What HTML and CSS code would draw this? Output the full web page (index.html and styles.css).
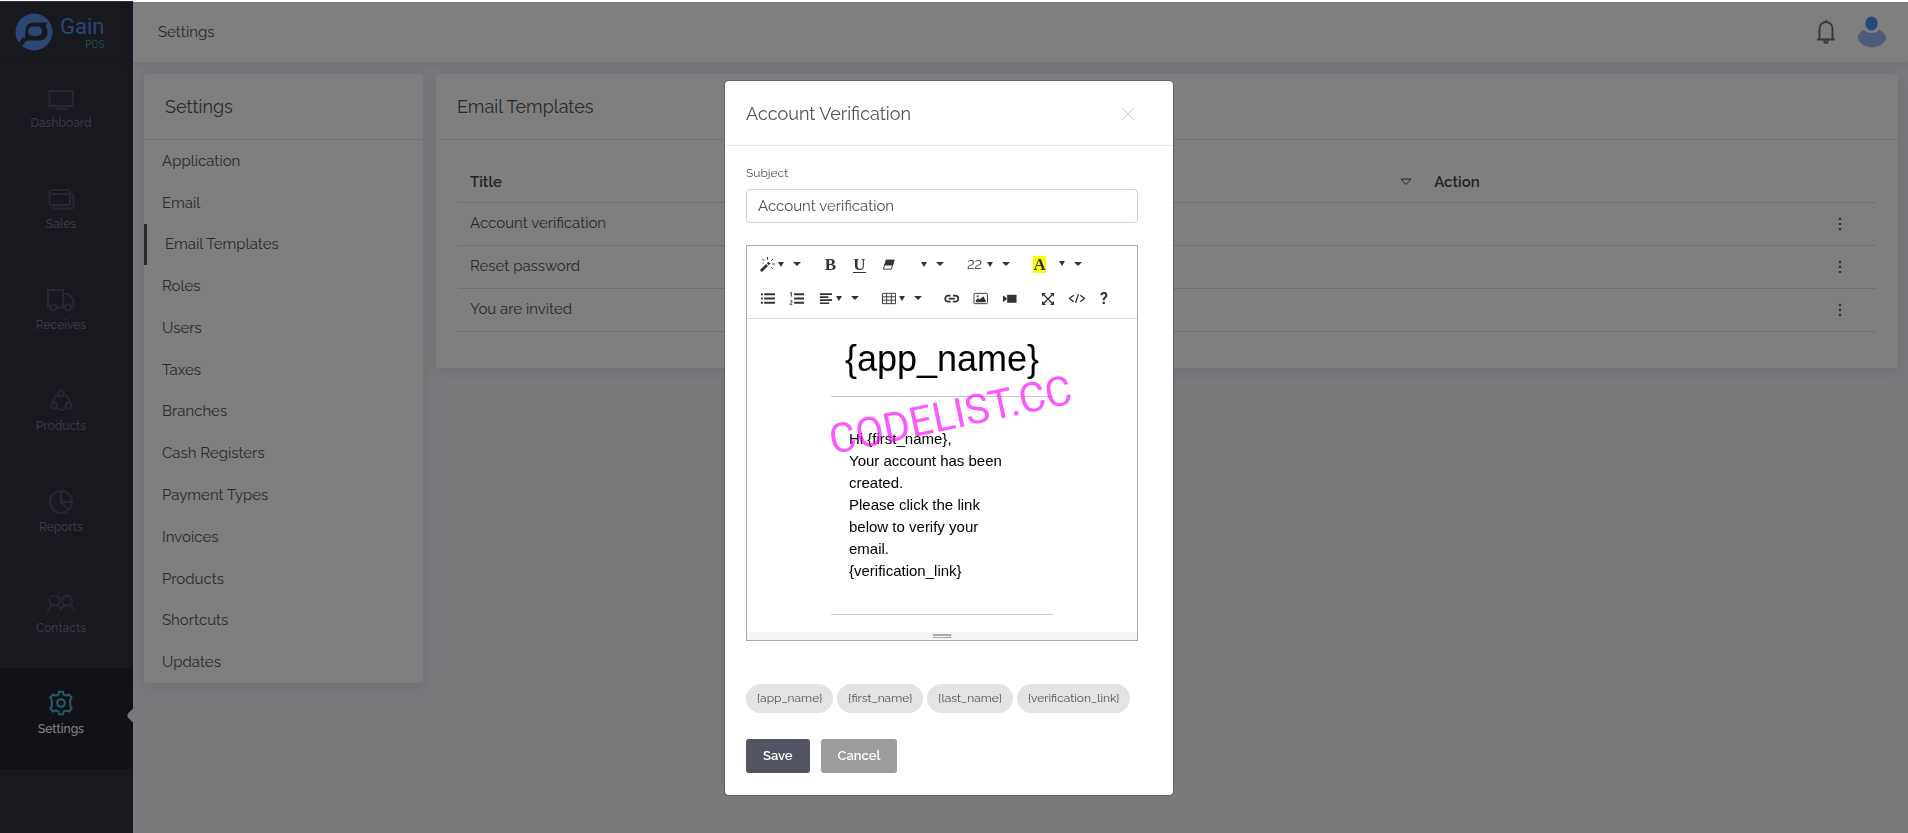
FILE: index.html
```html
<!DOCTYPE html>
<html lang="en">
<head>
<meta charset="utf-8">
<title>Gain POS - Settings</title>
<meta name="viewport" content="width=device-width, initial-scale=1">
<link rel="stylesheet" href="styles.css">
</head>
<body>
<div class="app">
  <aside class="sidebar">
    <a class="logo" href="#">
      <svg class="logo-mark" viewBox="0 0 38 38" aria-hidden="true">
        <circle cx="19" cy="19" r="18.5" fill="#568fe8"/>
        <path d="M7.500 32C10 26 10.500 22 10.500 18.500C10.500 12.500 13.500 9.500 19 9.500H32.500L30.500 12.500C32 15 32.500 17 32.500 19.500C32.500 25 29 27.500 24 27.500H18C14.500 27.500 12 27 9.500 29.500Z" fill="#30303e"/>
        <path d="M3 31L8 24L11 27L7 34Z" fill="#30303e"/>
        <rect x="13" y="13.500" width="14" height="9.500" rx="4.700" fill="#568fe8"/>
      </svg>
      <span class="logo-text"><span class="logo-name">Gain</span><span class="logo-sub">POS</span></span>
    </a>
    <nav class="nav">
      <a class="nav-item" href="#"><svg viewBox="0 0 28 28"><rect x="2.500" y="8" width="23.500" height="15"/><path d="M14.300 23v3M9 26h11"/></svg>Dashboard</a>
      <a class="nav-item" href="#"><svg viewBox="0 -1.500 28 28"><rect x="2.500" y="4.500" width="20.500" height="15" rx="2"/><path d="M2.500 8.500H23M23 8.500h2a1.500 1.500 0 0 1 1.500 1.500v11a2 2 0 0 1-2 2H8.500a2 2 0 0 1-2-2v-1.500M23 12.500h3.500"/></svg>Sales</a>
      <a class="nav-item" href="#"><svg viewBox="0 -1 28 28"><path d="M3.500 21.500H1V4h15v17.500M9.500 21.500h8.500M16 8h5.500l5 5.500v8h-2.500"/><circle cx="6.500" cy="21.500" r="3"/><circle cx="21" cy="21.500" r="3"/></svg>Receives</a>
      <a class="nav-item" href="#"><svg viewBox="0 -1 28 28"><circle cx="14" cy="6.500" r="3"/><circle cx="7" cy="18.500" r="3"/><circle cx="21.500" cy="18.500" r="3"/><path d="M11 7.500C7.500 9.500 6 12 6 15.500M17 7.500c4 2 5.500 4.500 5.500 8M9.500 21c3 2.500 6.500 2.500 9.500 0"/></svg>Products</a>
      <a class="nav-item" href="#"><svg viewBox="0 -1 28 28"><circle cx="14" cy="14" r="11"/><path d="M14 3v11h11M14 14l7.500 8"/></svg>Reports</a>
      <a class="nav-item" href="#"><svg viewBox="0 -2.500 28 28"><circle cx="7.500" cy="10" r="5"/><circle cx="20" cy="10" r="5"/><path d="M1 21c0-8 13-8 13-1.500C14 13 27 13 27 21"/></svg>Contacts</a>
      <a class="nav-item active" href="#" aria-current="page"><svg viewBox="0 0 28 28"><path d="M11.600 5.300L12 2.700h4l.4 2.600 2.600 1.300 3-1.100 2.600 3-1.500 2.700.1 5.600 1.400 2.700-2.600 3-3-.9-2.600 1.100-.4 2.600h-4l-.4-2.600L9 21.600l-3 .9-2.600-3 1.500-2.700-.1-5.600L3.400 8.500l2.600-3 3 1.100z"/><circle cx="14" cy="14" r="3.800"/></svg>Settings</a>
    </nav>
  </aside>

  <div class="main">
    <header class="topbar">
      <span>Settings</span>
      <div class="topbar-actions">
        <button class="icon-button" type="button" aria-label="Notifications">
          <svg class="bell" viewBox="0 0 18 24"><path d="M2.500 19V9.500C2.500 4.500 5.500 2 9 2s6.500 2.500 6.500 7.500V19M0 19.500h18M9 .3V2"/><circle cx="9" cy="21.300" r="1.700"/></svg>
        </button>
        <button class="icon-button" type="button" aria-label="Account">
          <svg class="avatar" viewBox="0 0 30 32"><ellipse cx="14.500" cy="7.500" rx="6.200" ry="7" fill="#5291f5"/><path d="M7 13.500C9 18 20 18 22 13.500C25.500 15 29.500 19.500 29.500 22C27 28 21 31.500 15 31.500S3 28 .5 22C.5 19.500 4 15 7 13.500Z" fill="#97b8f6"/></svg>
        </button>
      </div>
    </header>

    <div class="content">
      <section class="card">
        <h2 class="card-title">Settings</h2>
        <ul class="settings-list">
          <li><a href="#">Application</a></li>
          <li><a href="#">Email</a></li>
          <li><a class="current" href="#">Email Templates</a></li>
          <li><a href="#">Roles</a></li>
          <li><a href="#">Users</a></li>
          <li><a href="#">Taxes</a></li>
          <li><a href="#">Branches</a></li>
          <li><a href="#">Cash Registers</a></li>
          <li><a href="#">Payment Types</a></li>
          <li><a href="#">Invoices</a></li>
          <li><a href="#">Products</a></li>
          <li><a href="#">Shortcuts</a></li>
          <li><a href="#">Updates</a></li>
        </ul>
      </section>

      <section class="card">
        <h2 class="card-title">Email Templates</h2>
        <div class="table-wrap">
          <table class="table">
            <thead>
              <tr>
                <th class="col-title"><span class="sortable">Title <svg class="sort" viewBox="0 0 12 8"><path d="M1 1h10L6 6.500z"/></svg></span></th>
                <th>Action</th>
              </tr>
            </thead>
            <tbody>
              <tr><td>Account verification</td><td class="actions"><button class="icon-button" type="button" aria-label="Actions for Account verification"><svg class="dots" viewBox="0 0 4 14"><circle cx="2" cy="2" r="1.300"/><circle cx="2" cy="7" r="1.300"/><circle cx="2" cy="12" r="1.300"/></svg></button></td></tr>
              <tr><td>Reset password</td><td class="actions"><button class="icon-button" type="button" aria-label="Actions for Reset password"><svg class="dots" viewBox="0 0 4 14"><circle cx="2" cy="2" r="1.300"/><circle cx="2" cy="7" r="1.300"/><circle cx="2" cy="12" r="1.300"/></svg></button></td></tr>
              <tr><td>You are invited</td><td class="actions"><button class="icon-button" type="button" aria-label="Actions for You are invited"><svg class="dots" viewBox="0 0 4 14"><circle cx="2" cy="2" r="1.300"/><circle cx="2" cy="7" r="1.300"/><circle cx="2" cy="12" r="1.300"/></svg></button></td></tr>
            </tbody>
          </table>
        </div>
      </section>
    </div>
  </div>
</div>

<div class="backdrop">
  <div class="modal" role="dialog" aria-modal="true" aria-labelledby="modal-title">
    <div class="modal-header">
      <h2 class="modal-title" id="modal-title">Account Verification</h2>
      <button class="icon-button" type="button" aria-label="Close"><svg class="close" viewBox="0 0 12 12"><path d="M.5.500l11 11M11.500.500l-11 11"/></svg></button>
    </div>
    <form class="modal-body">
      <label class="label" for="subject">Subject</label>
      <input class="input" id="subject" type="text" value="Account verification">

      <div class="editor">
        <div class="toolbar">
          <div class="toolbar-row">
            <div class="group">
              <button class="tool lead" type="button" aria-label="Style"><svg class="ico" viewBox="0 0 16 16"><path d="M1 15L7.500 8.500" stroke-width="3"/><path d="M8.300 7.700L10 6" stroke-width="3"/><path d="M8 0v3M2.500 2l2 2M14 2l-2 2M13 7.500h3M12 11l2 2M3 6.500h1" stroke-width="1"/></svg><i class="caret"></i></button>
              <button class="tool more" type="button" aria-label="More styles"><i class="caret wide"></i></button>
            </div>
            <div class="group">
              <button class="tool serif" type="button" aria-label="Bold"><b>B</b></button>
              <button class="tool serif" type="button" aria-label="Underline"><b class="underlined">U</b></button>
              <button class="tool" type="button" aria-label="Remove formatting"><svg class="ico" viewBox="0 0 16 16"><path d="M5.500 3.500h8.500L11 13H2.500z" stroke-width="1"/><path d="M5.500 3h9L12.500 9H3.500z" fill="currentColor" stroke="none"/></svg></button>
            </div>
            <div class="group">
              <button class="tool lead" type="button" aria-label="Font family"><i class="caret"></i></button>
              <button class="tool more" type="button" aria-label="More fonts"><i class="caret wide"></i></button>
            </div>
            <div class="group">
              <button class="tool lead size" type="button" aria-label="Font size 22">22<i class="caret"></i></button>
              <button class="tool more" type="button" aria-label="More sizes"><i class="caret wide"></i></button>
            </div>
            <div class="group">
              <button class="tool serif" type="button" aria-label="Recent color"><b class="marked">A</b></button>
              <button class="tool more" type="button" aria-label="Text color"><i class="caret"></i></button>
              <button class="tool more" type="button" aria-label="More colors"><i class="caret wide"></i></button>
            </div>
          </div>
          <div class="toolbar-row">
            <div class="group">
              <button class="tool" type="button" aria-label="Unordered list"><svg class="ico" viewBox="0 0 16 16"><path d="M4.500 3.500H16M4.500 8H16M4.500 12.500H16M1 3.500h2M1 8h2M1 12.500h2" stroke-width="2"/></svg></button>
              <button class="tool" type="button" aria-label="Ordered list"><svg class="ico" viewBox="0 0 16 16"><path d="M5.500 3.500H16M5.500 8H16M5.500 12.500H16" stroke-width="2"/><path d="M1 2.500l1.500-1V6M1 10.500h2v1.700l-2 2h2.500" stroke-width="1"/></svg></button>
              <button class="tool lead" type="button" aria-label="Paragraph"><svg class="ico" viewBox="0 0 16 16"><path d="M2 3.300h13M2 6.500h9M2 9.700h13M2 13h10" stroke-width="1.700"/></svg><i class="caret"></i></button>
              <button class="tool more" type="button" aria-label="More alignment"><i class="caret wide"></i></button>
            </div>
            <div class="group">
              <button class="tool lead" type="button" aria-label="Table"><svg class="ico" viewBox="0 0 16 16"><path d="M1.500 2.500h14v11h-14zM1.500 6.200h14M1.500 9.800h14M6 2.500v11M11 2.500v11" stroke-width="1"/></svg><i class="caret"></i></button>
              <button class="tool more" type="button" aria-label="More table options"><i class="caret wide"></i></button>
            </div>
            <div class="group">
              <button class="tool" type="button" aria-label="Link"><svg class="ico" viewBox="0 0 16 16"><path d="M7 5H4.500a3.200 3.200 0 0 0 0 6.400H7M9.500 5H12a3.200 3.200 0 0 1 0 6.400H9.500M5 8.200h6.500" stroke-width="1.900"/></svg></button>
              <button class="tool" type="button" aria-label="Picture"><svg class="ico" viewBox="0 0 16 16"><rect x="1" y="2.500" width="14.500" height="11" rx="1" stroke-width="1"/><path d="M3 12V10l2.500-2.500L7 9l4-3.500L13.500 10v2z" fill="currentColor" stroke="none"/><circle cx="5" cy="5.500" r="1.100" fill="currentColor" stroke="none"/></svg></button>
              <button class="tool" type="button" aria-label="Video"><svg class="ico" viewBox="0 0 16 16"><path d="M5.500 4H15.500v8.500H5.500zM1 4.800L4.800 7.300v2L1 11.800z" fill="currentColor" stroke="none"/></svg></button>
            </div>
            <div class="group">
              <button class="tool" type="button" aria-label="Full screen"><svg class="ico small" viewBox="0 0 12 12"><path d="M1 1l10 10M11 1L1 11" stroke-width="1.300"/><path d="M0 0h4L0 4zM12 0v4L8 0zM0 12V8l4 4zM12 12H8l4-4z" fill="currentColor" stroke="none"/></svg></button>
              <button class="tool" type="button" aria-label="Code view"><svg class="ico large" viewBox="0 0 18 16"><path d="M5.500 4.500L1 8l4.500 3.500M12.500 4.500L17 8l-4.500 3.500M10.500 3.500l-3 9" stroke-width="1.400"/></svg></button>
              <button class="tool help" type="button" aria-label="Help"><b>?</b></button>
            </div>
          </div>
        </div>
        <div class="editable" contenteditable="true">
          <h1 class="mail-title">{app_name}</h1>
          <div class="mail-body">Hi {first_name},<br>Your account has been created.<br>Please click the link below to verify your email.<br>{verification_link}</div>
        </div>
        <div class="statusbar"><span class="grip"></span></div>
        <span class="watermark">CODELIST.CC</span>
      </div>

      <div class="chips">
        <button class="chip" type="button">{app_name}</button>
        <button class="chip" type="button">{first_name}</button>
        <button class="chip" type="button">{last_name}</button>
        <button class="chip" type="button">{verification_link}</button>
      </div>

      <div class="buttons">
        <button class="btn" type="button">Save</button>
        <button class="btn muted" type="button">Cancel</button>
      </div>
    </form>
  </div>
</div>
</body>
</html>
```
FILE: styles.css
```css
*, *::before, *::after { box-sizing: border-box; }

body {
  margin: 0;
  border-top: 1px solid #fff;
  background: #f2f4f9;
  color: #4e5259;
  font: 15px/22px Raleway, Lato, sans-serif;
  font-variant-numeric: lining-nums;
}

h1, h2, ul { margin: 0; padding: 0; font-weight: 400; }
ul { list-style: none; }
a { color: inherit; text-decoration: none; }
svg { display: block; fill: none; stroke: currentColor; }

button, input { font: inherit; color: inherit; }
button { border: 0; background: none; padding: 0; cursor: pointer; }
.icon-button { display: block; }

/* Page shell */
.app { display: flex; min-height: calc(100vh - 1px); }

.sidebar {
  flex: none;
  width: 133px;
  background: #30303e;
}

.logo {
  display: flex;
  align-items: center;
  gap: 7px;
  height: 61px;
  padding: 2px 0 0 15px;
  border-bottom: 1px solid #262633;
  font-family: Roboto, sans-serif;
}
.logo-mark { width: 38px; height: 38px; stroke: none; }
.logo-text { display: flex; flex-direction: column; align-items: flex-end; margin-bottom: 1px; }
.logo-name { color: #568fe8; font-size: 22px; line-height: 25px; }
.logo-sub { color: #3f9aa0; font-size: 10px; line-height: 11px; }

.nav-item {
  display: flex;
  flex-direction: column;
  align-items: center;
  position: relative;
  height: 101px;
  padding: 21px 11px 0 0;
  color: #737590;
  font-size: 12px;
  font-weight: 500;
  line-height: 20px;
}
.nav-item svg {
  width: 28px;
  height: 28px;
  margin-bottom: 2px;
  color: #505068;
  stroke-width: 2;
}
.nav-item.active { background: #232331; color: #fff; overflow: hidden; }
.nav-item.active svg { color: #48bcc9; }
.nav-item.active::after {
  content: "";
  position: absolute;
  top: 40px;
  right: -11px;
  width: 15px;
  height: 15px;
  border-radius: 4px;
  background: #f2f4f9;
  transform: rotate(45deg);
}

.main { flex: 1; min-width: 0; }

.topbar {
  display: flex;
  align-items: center;
  justify-content: space-between;
  height: 61px;
  padding: 0 21px 0 25px;
  background: #fff;
  box-shadow: 0 1px 10px rgba(60, 60, 90, 0.12);
}
.topbar-actions { display: flex; align-items: center; gap: 22px; color: #71727a; }
.bell { width: 18px; height: 24px; stroke-width: 2; }
.avatar { width: 30px; height: 32px; stroke: none; }

.content {
  display: grid;
  grid-template-columns: 279px 1fr;
  gap: 13px;
  align-items: start;
  padding: 12px 10px 12px 11px;
}

.card {
  border-radius: 4px;
  background: #fff;
  box-shadow: 0 2px 14px rgba(40, 40, 70, 0.12);
}
.card-title {
  padding: 21px;
  border-bottom: 1px solid #e8e8ec;
  font-size: 18px;
  line-height: 23px;
}

.settings-list { display: grid; grid-auto-rows: 1fr; height: 543px; }
.settings-list a { display: flex; align-items: center; height: 100%; padding-left: 18px; }
.settings-list .current { border-left: 3px solid #50525f; }

/* Template table */
.table-wrap { padding: 20px 22px 36px; }
.table { width: 100%; border-collapse: collapse; table-layout: fixed; text-align: left; }
.table th, .table td {
  height: 43px;
  padding: 0 10px 0 12px;
  border-bottom: 1px solid #dfdfe3;
}
.table td { padding-bottom: 2px; }
.table th { height: 42px; padding-top: 2px; color: #44474e; font-weight: 600; }
.col-title { width: 68%; }
.sortable { display: flex; align-items: center; justify-content: space-between; }
.sort { width: 12px; height: 8px; }
.table .actions { padding: 0 34px 0 12px; }
.actions .icon-button { margin-left: auto; }
.dots { width: 4px; height: 14px; fill: #5c5e6a; stroke: none; }

/* Modal */
.backdrop {
  display: flex;
  align-items: flex-start;
  justify-content: center;
  position: fixed;
  inset: 2px 0 0;
  padding: 78px 10px 0 0;
  overflow: auto;
  background: rgba(0, 0, 0, 0.5);
}
.modal {
  width: 450px;
  border: 1px solid rgba(0, 0, 0, 0.2);
  border-radius: 5px;
  background: #fff;
  background-clip: padding-box;
}
.modal-header {
  display: flex;
  align-items: center;
  justify-content: space-between;
  padding: 21px 39px 20px 21px;
  border-bottom: 1px solid #e8e8f0;
}
.modal-title { font-size: 18px; line-height: 23px; }
.close { width: 12px; height: 12px; color: #c8c8cc; }
.modal-body { padding: 17px 35px 22px 21px; }

.label { display: block; margin-bottom: 6px; font-size: 12px; line-height: 20px; }
.input {
  display: block;
  width: 100%;
  height: 34px;
  margin-bottom: 22px;
  padding: 0 11px;
  border: 1px solid #cdd1d9;
  border-radius: 4px;
  background: #fff;
  outline: 0;
}

.editor { position: relative; border: 1px solid #a9a9a9; }
.toolbar {
  display: grid;
  gap: 5px;
  padding: 4px 6px 5px;
  border-bottom: 1px solid #ddd;
  color: #333;
}
.toolbar-row { display: flex; gap: 11px; }
.group { display: flex; }
.tool {
  display: flex;
  align-items: center;
  gap: 3px;
  height: 29px;
  padding: 0 7px;
}
.tool.lead { padding-right: 4px; }
.tool.more { padding: 0 4px 2px 5px; }
.tool.size { gap: 5px; padding-left: 8px; font-size: 13px; }
.ico { width: 15px; height: 15px; }
.ico.small { width: 12px; height: 12px; }
.ico.large { width: 18px; height: 15px; }
.caret {
  border: 3px solid transparent;
  border-top: 5px solid #333;
  border-bottom: 0;
}
.caret.wide { border-width: 4px 4px 0; }
.serif { justify-content: center; width: 29px; font: 17px/17px "Liberation Serif", serif; }
.underlined { line-height: 15px; border-bottom: 1px solid #333; }
.marked { background: #ff0; }
.help { font: 16px/17px Roboto, sans-serif; }

.editable {
  padding: 20px 84px 17px;
  color: #000;
  font: 15px/22px "Liberation Sans", Arial, sans-serif;
  outline: 0;
}
.mail-title { padding-bottom: 17px; font-size: 36px; line-height: 40px; text-align: center; }
.mail-body {
  padding: 31px 45px 32px 18px;
  border: solid #c8c8c8;
  border-width: 1px 0;
}
.statusbar { display: flex; justify-content: center; padding: 2px 0; background: #f5f5f5; }
.grip { width: 18px; height: 4px; border: solid #a9a9a9; border-width: 2px 0 1px; }
.watermark {
  position: absolute;
  top: 144px;
  left: 80px;
  color: rgba(255, 0, 255, 0.66);
  font: 41px/50px Roboto, sans-serif;
  transform: rotate(-12deg);
  pointer-events: none;
}

.chips { display: flex; gap: 4px; margin-top: 43px; }
.chip {
  padding: 4px 11px 5px;
  border-radius: 15px;
  background: #e3e3e3;
  font-size: 12px;
  line-height: 20px;
}

.buttons { display: flex; gap: 11px; margin-top: 26px; }
.btn {
  padding: 7px 17px;
  border-radius: 3px;
  background: #525561;
  color: #fff;
  font-size: 13px;
  font-weight: 600;
  line-height: 20px;
}
.btn.muted { background: #9d9d9b; }
```
